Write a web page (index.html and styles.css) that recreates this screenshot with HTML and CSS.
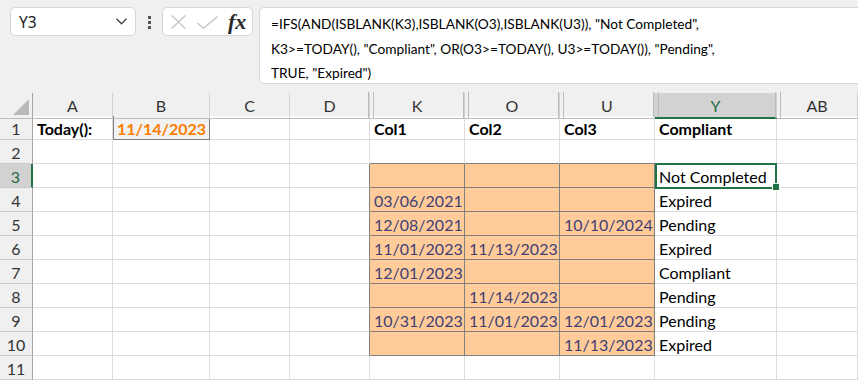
FILE: index.html
```html
<!DOCTYPE html>
<html lang="en">
<head>
  <meta charset="UTF-8">
  <title>Compliance sheet</title>
  <link rel="stylesheet" href="styles.css">
</head>
<body>

<div class="toolbar">
  <div class="name-box">
    <span>Y3</span>
    <svg width="11" height="7" viewBox="0 0 11 7"><polyline points="0.5,0.8 5.5,5.8 10.5,0.8" fill="none" stroke="#444" stroke-width="1.3"/></svg>
  </div>
  <div class="grip"><span></span><span></span><span></span></div>
  <div class="fx-box">
    <svg class="icon-x" width="15" height="14" viewBox="0 0 15 14"><path d="M0.5 0.5 L14.5 13.5 M14.5 0.5 L0.5 13.5" stroke="#c4c4c4" stroke-width="1.3"/></svg>
    <svg class="icon-check" width="21" height="13" viewBox="0 0 21 13"><polyline points="0.5,7 6.5,12.3 20.5,0.6" fill="none" stroke="#c4c4c4" stroke-width="1.3"/></svg>
    <span class="fx">fx</span>
  </div>
  <div class="formula">
    =IFS(AND(ISBLANK(K3),ISBLANK(O3),ISBLANK(U3)), "Not Completed",<br>
    K3&gt;=TODAY(), "Compliant", OR(O3&gt;=TODAY(), U3&gt;=TODAY()), "Pending",<br>
    TRUE, "Expired")
  </div>
</div>

<div class="sheet">
  <div class="row head">
    <div class="corner"></div>
    <div class="ch">A</div>
    <div class="ch">B</div>
    <div class="ch">C</div>
    <div class="ch">D</div>
    <div class="ch hid">K</div>
    <div class="ch hid">O</div>
    <div class="ch hid">U</div>
    <div class="ch hid on">Y</div>
    <div class="ch hid">AB</div>
  </div>

  <div class="row">
    <div class="rh">1</div>
    <div class="c b">Today():</div>
    <div class="c calc">11/14/2023</div>
    <div class="c"></div>
    <div class="c"></div>
    <div class="c b">Col1</div>
    <div class="c b">Col2</div>
    <div class="c b">Col3</div>
    <div class="c b">Compliant</div>
    <div class="c"></div>
  </div>

  <div class="row">
    <div class="rh">2</div>
    <div class="c"></div>
    <div class="c"></div>
    <div class="c"></div>
    <div class="c"></div>
    <div class="c gb"></div>
    <div class="c gb"></div>
    <div class="c gb"></div>
    <div class="c"></div>
    <div class="c"></div>
  </div>

  <div class="row">
    <div class="rh on">3</div>
    <div class="c"></div>
    <div class="c"></div>
    <div class="c"></div>
    <div class="c gr"></div>
    <div class="c in"></div>
    <div class="c in"></div>
    <div class="c in"></div>
    <div class="c sel">Not Completed</div>
    <div class="c"></div>
  </div>

  <div class="row">
    <div class="rh">4</div>
    <div class="c"></div>
    <div class="c"></div>
    <div class="c"></div>
    <div class="c gr"></div>
    <div class="c in">03/06/2021</div>
    <div class="c in"></div>
    <div class="c in"></div>
    <div class="c">Expired</div>
    <div class="c"></div>
  </div>

  <div class="row">
    <div class="rh">5</div>
    <div class="c"></div>
    <div class="c"></div>
    <div class="c"></div>
    <div class="c gr"></div>
    <div class="c in">12/08/2021</div>
    <div class="c in"></div>
    <div class="c in">10/10/2024</div>
    <div class="c">Pending</div>
    <div class="c"></div>
  </div>

  <div class="row">
    <div class="rh">6</div>
    <div class="c"></div>
    <div class="c"></div>
    <div class="c"></div>
    <div class="c gr"></div>
    <div class="c in">11/01/2023</div>
    <div class="c in">11/13/2023</div>
    <div class="c in"></div>
    <div class="c">Expired</div>
    <div class="c"></div>
  </div>

  <div class="row">
    <div class="rh">7</div>
    <div class="c"></div>
    <div class="c"></div>
    <div class="c"></div>
    <div class="c gr"></div>
    <div class="c in">12/01/2023</div>
    <div class="c in"></div>
    <div class="c in"></div>
    <div class="c">Compliant</div>
    <div class="c"></div>
  </div>

  <div class="row">
    <div class="rh">8</div>
    <div class="c"></div>
    <div class="c"></div>
    <div class="c"></div>
    <div class="c gr"></div>
    <div class="c in"></div>
    <div class="c in">11/14/2023</div>
    <div class="c in"></div>
    <div class="c">Pending</div>
    <div class="c"></div>
  </div>

  <div class="row">
    <div class="rh">9</div>
    <div class="c"></div>
    <div class="c"></div>
    <div class="c"></div>
    <div class="c gr"></div>
    <div class="c in">10/31/2023</div>
    <div class="c in">11/01/2023</div>
    <div class="c in">12/01/2023</div>
    <div class="c">Pending</div>
    <div class="c"></div>
  </div>

  <div class="row">
    <div class="rh">10</div>
    <div class="c"></div>
    <div class="c"></div>
    <div class="c"></div>
    <div class="c gr"></div>
    <div class="c in"></div>
    <div class="c in"></div>
    <div class="c in">11/13/2023</div>
    <div class="c">Expired</div>
    <div class="c"></div>
  </div>

  <div class="row">
    <div class="rh">11</div>
    <div class="c"></div>
    <div class="c"></div>
    <div class="c"></div>
    <div class="c"></div>
    <div class="c"></div>
    <div class="c"></div>
    <div class="c"></div>
    <div class="c"></div>
    <div class="c"></div>
  </div>
</div>

</body>
</html>
```

FILE: styles.css
```css
* {
  box-sizing: border-box;
}

body {
  margin: 0;
  width: 858px;
  overflow: hidden;
  background-color: white;
  font-family: Lato, 'Liberation Sans', sans-serif;
  color: black;
}

/* formula bar */

.toolbar {
  display: flex;
  align-items: flex-start;
  height: 93px;
  padding: 7px 0 0 10px;
  background-color: #f0f0f0;
}

.toolbar > div {
  flex-shrink: 0;
}

.name-box {
  display: flex;
  align-items: center;
  justify-content: space-between;
  width: 126px;
  height: 29px;
  padding: 0 8px 0 8px;
  background-color: white;
  border: 1px solid #d6d6d6;
  border-radius: 5px;
  font-family: 'Noto Sans', sans-serif;
  font-size: 15.5px;
  color: #222;
}

.grip {
  display: flex;
  flex-direction: column;
  align-items: center;
  gap: 2px;
  width: 26px;
  padding-top: 9px;
}

.grip span {
  width: 3px;
  height: 3px;
  background-color: #555;
}

.fx-box {
  display: flex;
  align-items: center;
  width: 91px;
  height: 29px;
  padding-left: 8px;
  background-color: white;
  border: 1px solid #d6d6d6;
  border-radius: 5px;
}

.icon-check {
  margin-left: 11px;
  margin-top: 2px;
}

.fx {
  margin-left: 10px;
  font-family: 'Liberation Serif', serif;
  font-style: italic;
  font-weight: bold;
  font-size: 22px;
  line-height: 22px;
  color: #2a2a2a;
}

.formula {
  width: 640px;
  height: 77px;
  margin-left: 6px;
  padding: 4px 11px;
  background-color: white;
  border: 1px solid #d6d6d6;
  border-radius: 5px;
  font-size: 13.7px;
  line-height: 24.5px;
  white-space: nowrap;
  color: #000;
}

/* grid */

.row {
  display: grid;
  grid-template-columns: 33px 80px 97px 80px 80px 95px 95px 95px 122px 81px;
  height: 24px;
}

.row.head {
  height: 23px;
  background-color: #f0f0f0;
}

.corner {
  position: relative;
  border-right: 1px solid #a6a6a6;
  border-bottom: 1px solid #bdbdbd;
}

.corner::after {
  content: '';
  position: absolute;
  right: 3px;
  bottom: 3px;
  width: 16px;
  height: 16px;
  background-color: #b9b9b9;
  clip-path: polygon(100% 0, 100% 100%, 0 100%);
}

.ch {
  position: relative;
  text-align: center;
  font-size: 16px;
  line-height: 23px;
  padding-top: 1px;
  color: #333;
  border-right: 1px solid #d0d0d0;
  border-bottom: 1px solid #bdbdbd;
}

.ch.hid::before {
  content: '';
  position: absolute;
  left: -2px;
  top: -1px;
  bottom: 0;
  width: 4px;
  border-left: 1px solid #bcbcbc;
  border-right: 1px solid #bcbcbc;
}

.ch.on {
  background-color: #d2d2d2;
  color: #1e6b43;
  border-bottom: 2px solid #217346;
}

.rh {
  text-align: center;
  font-size: 16px;
  line-height: 21px;
  padding-top: 2px;
  color: #333;
  background-color: #f0f0f0;
  border-right: 1px solid #a6a6a6;
  border-bottom: 1px solid #c8c8c8;
}

.rh.on {
  background-color: #d2d2d2;
  color: #1e6b43;
  border-right: 2px solid #217346;
}

.c {
  padding: 2px 4px 0 4px;
  font-size: 16px;
  line-height: 21px;
  white-space: nowrap;
  border-right: 1px solid #dcdcdc;
  border-bottom: 1px solid #dcdcdc;
}

.b {
  font-weight: bold;
}

.calc {
  text-align: right;
  padding-right: 3px;
  font-weight: bold;
  color: #fa7d00;
  background-color: #f2f2f2;
  border-right-color: #7f7f7f;
  border-bottom-color: #7f7f7f;
  box-shadow: inset 1px 0 0 #7f7f7f;
}

.in {
  text-align: right;
  padding-right: 3px;
  color: #3f3f76;
  background-color: #ffcc99;
  border-right-color: #7f7f7f;
  border-bottom-color: #7f7f7f;
}

.gb {
  border-bottom-color: #7f7f7f;
}

.gr {
  border-right-color: #7f7f7f;
}

.sel {
  position: relative;
}

.sel::after {
  content: '';
  position: absolute;
  left: 0;
  top: -1px;
  right: -1px;
  bottom: -2px;
  border: 2px solid #217346;
}

.sel::before {
  content: '';
  position: absolute;
  right: -4px;
  bottom: -4px;
  width: 6px;
  height: 6px;
  background-color: #217346;
  border: 1px solid white;
  z-index: 1;
}
```
